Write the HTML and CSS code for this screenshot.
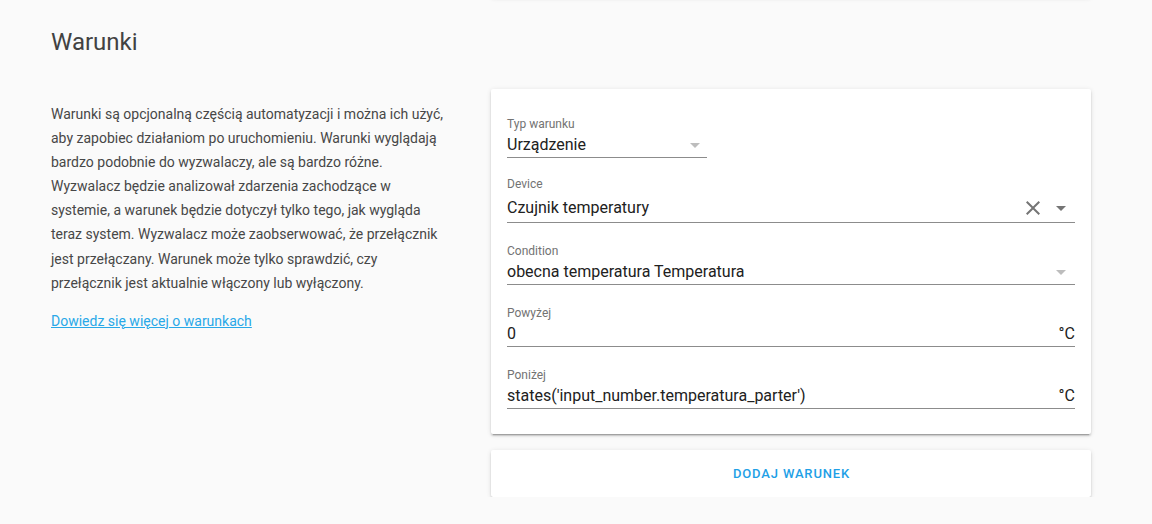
FILE: index.html
```html
<!DOCTYPE html>
<html lang="pl">
<head>
<meta charset="utf-8">
<title>Warunki</title>
<link rel="stylesheet" href="styles.css">
</head>
<body>
<div class="section">
  <div class="together">
    <div class="spacer"></div>
    <div class="prev-card"></div>
  </div>
  <h1 class="header">Warunki</h1>
  <div class="together content">
    <div class="intro">
      <p>Warunki są opcjonalną częścią automatyzacji i można ich użyć, aby zapobiec działaniom po uruchomieniu. Warunki wyglądają bardzo podobnie do wyzwalaczy, ale są bardzo różne. Wyzwalacz będzie analizował zdarzenia zachodzące w systemie, a warunek będzie dotyczył tylko tego, jak wygląda teraz system. Wyzwalacz może zaobserwować, że przełącznik jest przełączany. Warunek może tylko sprawdzić, czy przełącznik jest aktualnie włączony lub wyłączony.</p>
      <p><a class="link" href="#">Dowiedz się więcej o warunkach</a></p>
    </div>
    <div class="cards">
      <div class="card form-card">
        <div class="field field-short">
          <div class="label">Typ warunku</div>
          <div class="value-row">
            <span class="value">Urządzenie</span>
            <svg class="icon arrow light" viewBox="0 0 24 24"><path d="M7,10L12,15L17,10H7Z"/></svg>
          </div>
        </div>
        <div class="field field-device">
          <div class="label">Device</div>
          <div class="value-row tall">
            <span class="value">Czujnik temperatury</span>
            <svg class="icon close" viewBox="0 0 24 24"><path d="M19,6.41L17.59,5L12,10.59L6.41,5L5,6.41L10.59,12L5,17.59L6.41,19L12,13.41L17.59,19L19,17.59L13.41,12L19,6.41Z"/></svg>
            <svg class="icon arrow" viewBox="0 0 24 24"><path d="M7,10L12,15L17,10H7Z"/></svg>
          </div>
        </div>
        <div class="field">
          <div class="label">Condition</div>
          <div class="value-row">
            <span class="value">obecna temperatura Temperatura</span>
            <svg class="icon arrow light" viewBox="0 0 24 24"><path d="M7,10L12,15L17,10H7Z"/></svg>
          </div>
        </div>
        <div class="field">
          <div class="label">Powyżej</div>
          <div class="value-row">
            <span class="value">0</span>
            <span class="suffix">°C</span>
          </div>
        </div>
        <div class="field">
          <div class="label">Poniżej</div>
          <div class="value-row">
            <span class="value">states('input_number.temperatura_parter')</span>
            <span class="suffix">°C</span>
          </div>
        </div>
      </div>
      <div class="card button-card">
        <span class="button">Dodaj warunek</span>
      </div>
    </div>
  </div>
</div>
</body>
</html>
```
FILE: styles.css
```css
html, body {
  margin: 0;
  padding: 0;
  background: #fafafa;
  font-family: Roboto, "Noto Sans", "Liberation Sans", sans-serif;
}

.section {
  width: 1040px;
  margin-left: 51px;
}

.together {
  display: flex;
  align-items: flex-start;
}

.spacer {
  width: 440px;
  flex: none;
}

.prev-card {
  flex: 1;
  height: 20px;
  margin-top: -23px;
  background: #fff;
  border-radius: 2px;
  box-shadow: 0 2px 2px 0 rgba(0,0,0,.14), 0 1px 5px 0 rgba(0,0,0,.12), 0 3px 1px -2px rgba(0,0,0,.2);
}

.header {
  margin: 26px 0 0;
  font-size: 24px;
  line-height: 32px;
  font-weight: 400;
  color: #424242;
}

.content {
  margin-top: 31px;
}

.intro {
  width: 400px;
  margin-right: 40px;
  flex: none;
  padding-top: 13px;
  font-size: 14px;
  line-height: 24.1px;
  color: #474747;
}

.intro p {
  margin: 0 0 14px;
}

.link {
  color: #29a8e8;
  text-decoration: underline;
}

.cards {
  flex: 1;
  display: flex;
  flex-direction: column;
  gap: 16px;
}

.card {
  background: #fff;
  border-radius: 2px;
  box-shadow: 0 2px 2px 0 rgba(0,0,0,.14), 0 1px 5px 0 rgba(0,0,0,.12), 0 3px 1px -2px rgba(0,0,0,.2);
}

.form-card {
  padding: 15px 16px 17px;
}

.field {
  padding: 12px 0 8px;
}

.field-device {
  padding-top: 10px;
}

.field-short {
  width: 200px;
}

.label {
  font-size: 12px;
  line-height: 16px;
  color: #737373;
}

.value-row {
  margin-top: 1px;
  height: 24px;
  display: flex;
  align-items: center;
  border-bottom: 1px solid #8c8c8c;
}

.value-row.tall {
  height: 29px;
}

.value {
  flex: 1;
  font-size: 16px;
  line-height: 24px;
  color: #212121;
  white-space: nowrap;
}

.suffix {
  font-size: 16px;
  line-height: 24px;
  color: #212121;
}

.icon {
  flex: none;
  width: 24px;
  height: 24px;
  fill: #757575;
}

.icon.light {
  fill: #bdbdbd;
  margin-right: 2px;
}

.icon.close {
  margin-right: 4px;
}

.icon.arrow {
  margin-right: 2px;
}

.field-short .icon.arrow {
  margin-right: 0;
}

.button-card {
  height: 47px;
  display: flex;
  align-items: center;
  justify-content: center;
}

.button {
  font-size: 13px;
  font-weight: 500;
  letter-spacing: 0.85px;
  text-transform: uppercase;
  color: #1ea0e6;
  padding-left: 1px;
}
```
